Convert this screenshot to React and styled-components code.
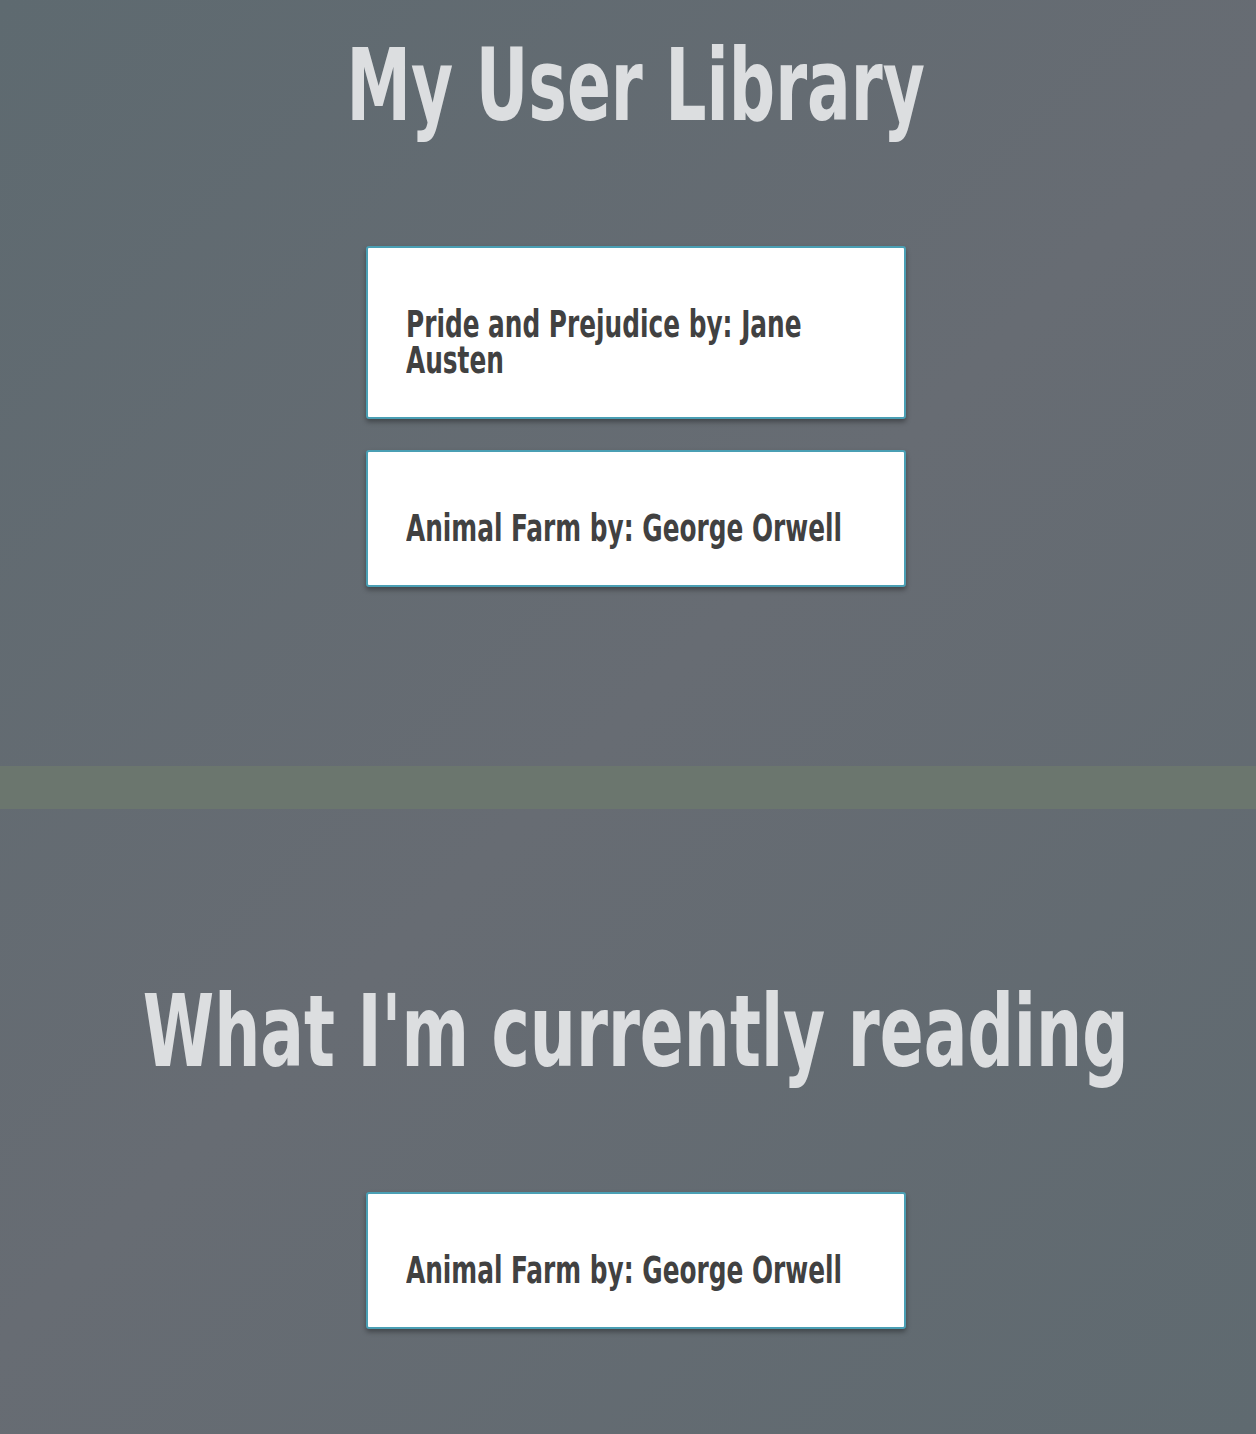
import React from 'react'
import styled, { createGlobalStyle } from 'styled-components'

// no condensed gothic installed, so DejaVu Sans Condensed is squeezed horizontally
const GlobalStyle = createGlobalStyle`
    html, body {
        margin: 0;
        padding: 0;
    }
    body {
        font-family: "DejaVu Sans Condensed", "Liberation Sans", sans-serif;
        background: linear-gradient(135deg, #5e6a70 0%, #676c73 50%, #5f6a70 100%);
        min-height: 1434px;
        overflow: hidden;
    }
`

const Page = styled.div`
    display: flex;
    flex-direction: column;
    min-height: 1434px;
    padding-left: 16px;
`

const Section = styled.section`
    display: flex;
    flex-direction: column;
    align-items: center;
    height: ${props => props.height}px;
    padding-top: ${props => props.top}px;
    box-sizing: border-box;
`

const Divider = styled.div`
    height: 43px;
    margin-left: -16px;
    background-color: #6b766e;
`

const Title = styled.h1`
    margin: 0 0 ${props => props.gap}px;
    font-size: 100px;
    line-height: 100px;
    font-weight: bold;
    color: #dcdee0;
    white-space: nowrap;
    transform: scaleX(0.72);
`

const List = styled.div`
    display: flex;
    flex-direction: column;
    gap: 31px;
`

const Card = styled.div`
    width: 540px;
    box-sizing: border-box;
    background-color: #fff;
    border: 2px solid #4a9fb4;
    border-radius: 3px;
    box-shadow: 0 3px 5px rgba(0, 0, 0, 0.35);
    padding: 59px 38px 38px;
`

const BookTitle = styled.h2`
    margin: 0;
    width: 617px;
    font-size: 37px;
    line-height: 36px;
    font-weight: bold;
    color: #414141;
    transform: scaleX(0.745);
    transform-origin: left center;
`

const library = [
    { title: 'Pride and Prejudice', author: 'Jane Austen' },
    { title: 'Animal Farm', author: 'George Orwell' },
]

const reading = [{ title: 'Animal Farm', author: 'George Orwell' }]

const BookList = ({ books }) => (
    <List>
        {books.map((book, i) => (
            <Card key={i}>
                <BookTitle>{book.title} by: {book.author}</BookTitle>
            </Card>
        ))}
    </List>
)

export default function App() {
    return (
        <Page>
            <GlobalStyle />
            <Section height={766} top={36}>
                <Title gap={110}>My User Library</Title>
                <BookList books={library} />
            </Section>
            <Divider />
            <Section height={625} top={173}>
                <Title gap={110}>What I'm currently reading</Title>
                <BookList books={reading} />
            </Section>
        </Page>
    )
}
